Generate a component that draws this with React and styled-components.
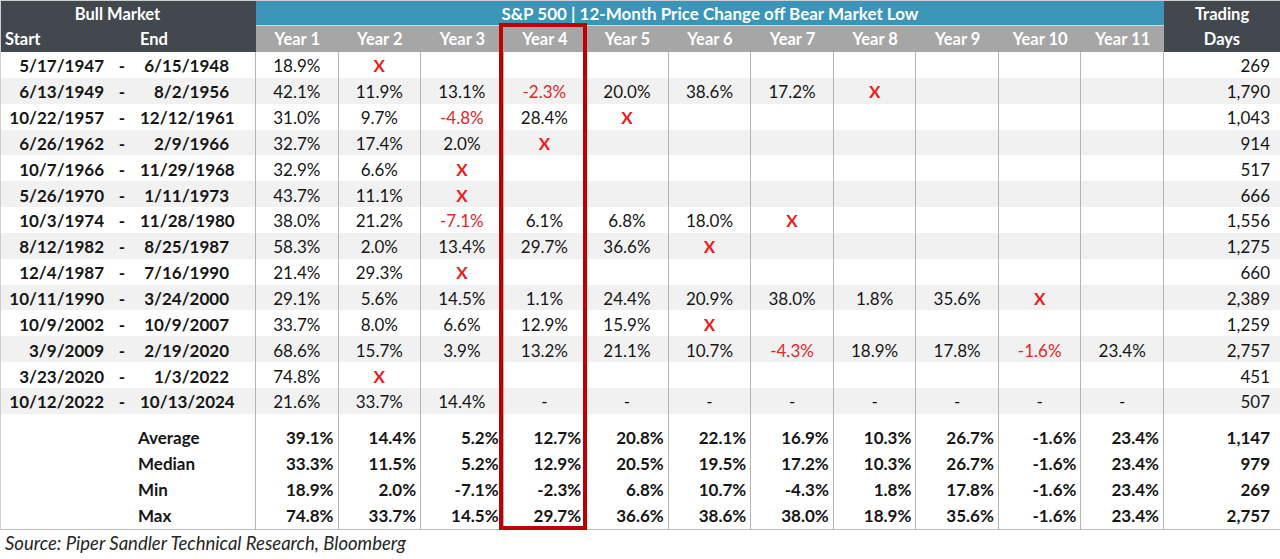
import React from 'react';
import styled, { createGlobalStyle } from 'styled-components';

const COLS = '255px repeat(11, 1fr) 116px';

const GlobalStyle = createGlobalStyle`
  body {
    margin: 0;
    background: #fff;
    font-family: Lato, "Open Sans", sans-serif;
    color: #161616;
  }
`;

const Page = styled.div`
  width: 1280px;
`;

const Sheet = styled.div`
  position: relative;
  border-top: 1px solid #cfcfcf;
  border-left: 1px solid #cfcfcf;
  border-bottom: 1px solid #bdbdbd;
`;

const HeadRow = styled.div`
  display: grid;
  grid-template-columns: ${COLS};
  height: ${({ $h }) => $h}px;
`;

const HeadCell = styled.div`
  grid-column: ${({ $span }) => $span || 'auto'};
  background: ${({ $bg }) => $bg};
  color: #fff;
  font-weight: 700;
  font-size: ${({ $size }) => $size || 16.5}px;
  display: flex;
  align-items: center;
  justify-content: center;
  padding-right: ${({ $pr }) => $pr || 0}px;
  border-bottom: ${({ $line }) => ($line ? '1px solid #d6d6d6' : 'none')};
`;

const SplitHead = styled.div`
  background: #43484e;
  color: #fff;
  font-weight: 700;
  font-size: 16.5px;
  display: grid;
  grid-template-columns: 103px 36px 89px;
  align-items: center;
`;

const StartLabel = styled.span`
  padding-left: 4px;
`;

const EndLabel = styled.span`
  grid-column: 3;
`;

const DataRow = styled.div`
  display: grid;
  grid-template-columns: ${COLS};
  height: 25.85px;
  background: ${({ $shade }) => ($shade ? '#f1f1f1' : '#fff')};
  font-size: 17px;
  & > * {
    box-sizing: border-box;
    padding-top: 2px;
  }
  &:last-child {
    border-bottom: 1px solid #b9b9b9;
  }
`;

const DateCell = styled.div`
  display: grid;
  grid-template-columns: 103px 36px 89px;
  align-items: center;
  font-weight: 700;
  border-right: 1px solid #b4b4b4;
`;

const Right = styled.span`
  text-align: right;
`;

const Dash = styled.span`
  text-align: center;
`;

const ValueCell = styled.div`
  display: flex;
  align-items: center;
  justify-content: center;
  border-right: 1px solid #b4b4b4;
  color: ${({ $neg }) => ($neg ? '#e3262b' : 'inherit')};
`;

const Cross = styled.span`
  color: #ec1c1c;
  font-weight: 700;
`;

const DaysCell = styled.div`
  display: flex;
  align-items: center;
  justify-content: flex-end;
  padding-right: 10px;
  font-weight: ${({ $bold }) => ($bold ? 700 : 400)};
`;

const SummaryRow = styled.div`
  display: grid;
  grid-template-columns: ${COLS};
  font-size: 17px;
  font-weight: 700;
  & > * {
    height: 26px;
    padding-top: ${({ $first }) => ($first ? 11 : 0)}px;
  }
`;

const LabelCell = styled.div`
  display: flex;
  align-items: center;
  padding-left: 137px;
  border-right: 1px solid #b4b4b4;
`;

const StatCell = styled.div`
  display: flex;
  align-items: center;
  justify-content: flex-end;
  padding-right: 4px;
  border-right: 1px solid #b4b4b4;
`;

const Highlight = styled.div`
  position: absolute;
  top: 22px;
  bottom: -1px;
  left: calc(254px + (100% - 371px) * 3 / 11 - 4px);
  width: calc((100% - 371px) / 11 + 6px);
  border: 4px solid #c00000;
  box-sizing: border-box;
  pointer-events: none;
`;

const Source = styled.div`
  font-style: italic;
  font-size: 18.5px;
  color: #262626;
  padding: 2px 0 0 5px;
`;

const rows = [
  ['5/17/1947', '6/15/1948', ['18.9%', 'X'], '269'],
  ['6/13/1949', '8/2/1956', ['42.1%', '11.9%', '13.1%', '-2.3%', '20.0%', '38.6%', '17.2%', 'X'], '1,790'],
  ['10/22/1957', '12/12/1961', ['31.0%', '9.7%', '-4.8%', '28.4%', 'X'], '1,043'],
  ['6/26/1962', '2/9/1966', ['32.7%', '17.4%', '2.0%', 'X'], '914'],
  ['10/7/1966', '11/29/1968', ['32.9%', '6.6%', 'X'], '517'],
  ['5/26/1970', '1/11/1973', ['43.7%', '11.1%', 'X'], '666'],
  ['10/3/1974', '11/28/1980', ['38.0%', '21.2%', '-7.1%', '6.1%', '6.8%', '18.0%', 'X'], '1,556'],
  ['8/12/1982', '8/25/1987', ['58.3%', '2.0%', '13.4%', '29.7%', '36.6%', 'X'], '1,275'],
  ['12/4/1987', '7/16/1990', ['21.4%', '29.3%', 'X'], '660'],
  ['10/11/1990', '3/24/2000', ['29.1%', '5.6%', '14.5%', '1.1%', '24.4%', '20.9%', '38.0%', '1.8%', '35.6%', 'X'], '2,389'],
  ['10/9/2002', '10/9/2007', ['33.7%', '8.0%', '6.6%', '12.9%', '15.9%', 'X'], '1,259'],
  ['3/9/2009', '2/19/2020', ['68.6%', '15.7%', '3.9%', '13.2%', '21.1%', '10.7%', '-4.3%', '18.9%', '17.8%', '-1.6%', '23.4%'], '2,757'],
  ['3/23/2020', '1/3/2022', ['74.8%', 'X'], '451'],
  ['10/12/2022', '10/13/2024', ['21.6%', '33.7%', '14.4%', '-', '-', '-', '-', '-', '-', '-', '-'], '507'],
];

const stats = [
  ['Average', ['39.1%', '14.4%', '5.2%', '12.7%', '20.8%', '22.1%', '16.9%', '10.3%', '26.7%', '-1.6%', '23.4%'], '1,147'],
  ['Median', ['33.3%', '11.5%', '5.2%', '12.9%', '20.5%', '19.5%', '17.2%', '10.3%', '26.7%', '-1.6%', '23.4%'], '979'],
  ['Min', ['18.9%', '2.0%', '-7.1%', '-2.3%', '6.8%', '10.7%', '-4.3%', '1.8%', '17.8%', '-1.6%', '23.4%'], '269'],
  ['Max', ['74.8%', '33.7%', '14.5%', '29.7%', '36.6%', '38.6%', '38.0%', '18.9%', '35.6%', '-1.6%', '23.4%'], '2,757'],
];

const years = Array.from({ length: 11 }, (_, i) => `Year ${i + 1}`);

const pad = (vals) => [...vals, ...Array(11 - vals.length).fill('')];

export default function App() {
  return (
    <Page>
      <GlobalStyle />
      <Sheet>
        <HeadRow $h={25}>
          <HeadCell $bg="#43484e" $pr={22}>Bull Market</HeadCell>
          <HeadCell $bg="#3a95b8" $span="2 / span 11" $size={17} $line>
            S&amp;P 500 | 12-Month Price Change off Bear Market Low
          </HeadCell>
          <HeadCell $bg="#43484e">Trading</HeadCell>
        </HeadRow>
        <HeadRow $h={26}>
          <SplitHead>
            <StartLabel>Start</StartLabel>
            <EndLabel>End</EndLabel>
          </SplitHead>
          {years.map((y) => (
            <HeadCell key={y} $bg="#a6a6a6">{y}</HeadCell>
          ))}
          <HeadCell $bg="#43484e">Days</HeadCell>
        </HeadRow>

        {rows.map(([start, end, vals, days], i) => (
          <DataRow key={start} $shade={i % 2 === 1}>
            <DateCell>
              <Right>{start}</Right>
              <Dash>-</Dash>
              <Right>{end}</Right>
            </DateCell>
            {pad(vals).map((v, j) => (
              <ValueCell key={j} $neg={v.startsWith('-') && v.length > 1}>
                {v === 'X' ? <Cross>X</Cross> : v}
              </ValueCell>
            ))}
            <DaysCell>{days}</DaysCell>
          </DataRow>
        ))}

        {stats.map(([label, vals, days], i) => (
          <SummaryRow key={label} $first={i === 0}>
            <LabelCell>{label}</LabelCell>
            {vals.map((v, j) => (
              <StatCell key={j}>{v}</StatCell>
            ))}
            <DaysCell $bold>{days}</DaysCell>
          </SummaryRow>
        ))}

        <Highlight />
      </Sheet>
      <Source>Source: Piper Sandler Technical Research, Bloomberg</Source>
    </Page>
  );
}
